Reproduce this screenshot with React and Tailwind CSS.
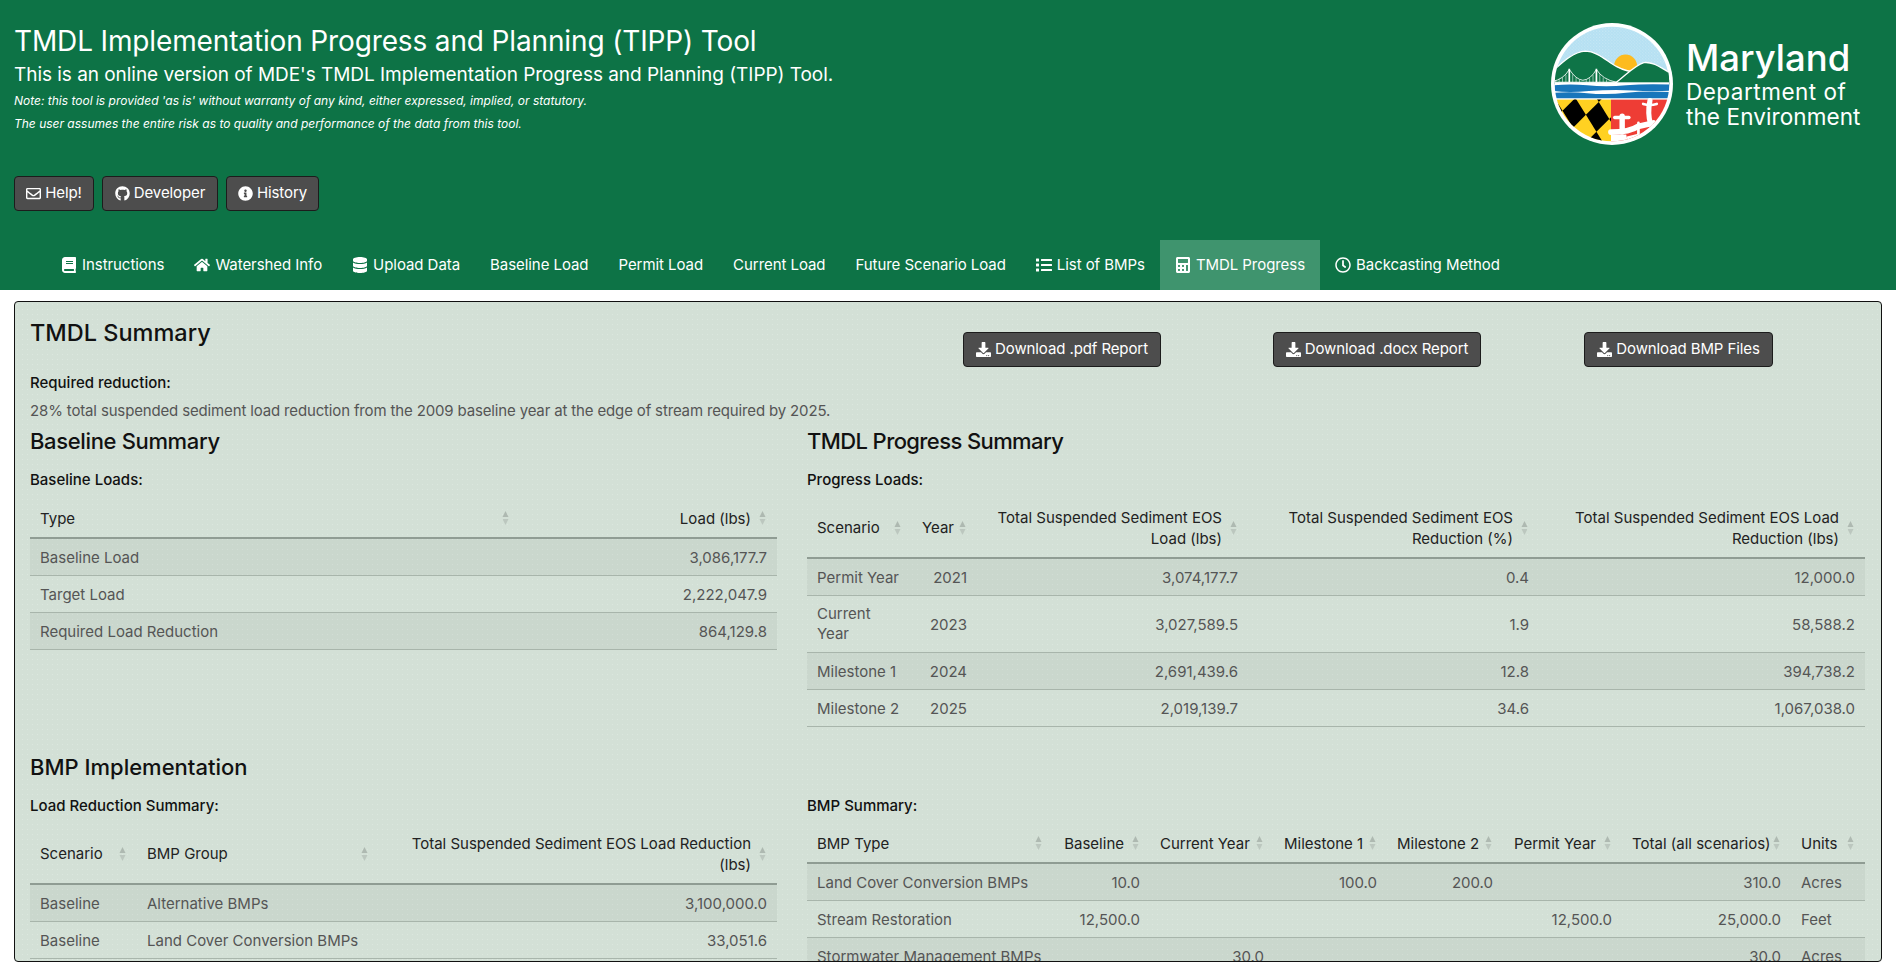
import React from "react";
import { FaRegEnvelope, FaGithub, FaInfoCircle, FaBook, FaHome, FaDatabase, FaList, FaCalculator, FaRegClock, FaDownload } from "react-icons/fa";

const cells = [];
for (let i = -4; i < 8; i++) {
  for (let j = -4; j < 8; j++) {
    if ((i + j + 40) % 2 === 0) {
      const p = (a, b) => `${72 + a * 31 + b * 38},${282 + a * 50 - b * 38}`;
      cells.push(`${p(i, j)} ${p(i + 1, j)} ${p(i + 1, j + 1)} ${p(i, j + 1)}`);
    }
  }
}

function Logo() {
  return (
    <svg width="122" height="122" viewBox="38 23 360 360" className="shrink-0">
      <defs>
        <clipPath id="c"><circle cx="218" cy="203" r="169" /></clipPath>
        <clipPath id="q"><rect x="38" y="249" width="177" height="140" /></clipPath>
        <pattern id="dots" width="9" height="9" patternUnits="userSpaceOnUse">
          <circle cx="2" cy="2" r="1.1" fill="#fff" />
          <circle cx="6.5" cy="6.5" r="0.9" fill="#fff" />
        </pattern>
      </defs>
      <circle cx="218" cy="203" r="180" fill="#fff" />
      <g clipPath="url(#c)">
        <rect x="38" y="23" width="360" height="180" fill="#b5e0f2" />
        <rect x="38" y="23" width="360" height="120" fill="url(#dots)" />
        <circle cx="258" cy="150" r="34" fill="#fdbb1e" />
        <path d="M40 168 C75 135 105 108 140 106 C175 106 205 138 232 152 C250 162 270 168 300 168 L400 168 L400 205 L40 205Z" fill="#0e7447" stroke="#fff" strokeWidth="4" />
        <path d="M228 200 C255 180 285 148 312 140 C340 136 365 158 400 176 L400 205 L228 205Z" fill="#0e7447" stroke="#fff" strokeWidth="4" />
        <g stroke="#fff" fill="none">
          <path d="M92 158 V198 M172 158 V198" strokeWidth="5" />
          <path d="M40 196 Q75 190 92 160 Q112 190 132 192 Q155 190 172 160 Q190 190 232 198" strokeWidth="2.5" />
          <path d="M52 192 V198 M62 188 V198 M72 184 V198 M82 176 V198 M102 174 V198 M112 184 V198 M122 190 V198 M142 190 V198 M152 186 V198 M162 176 V198 M182 174 V198 M192 184 V198 M202 190 V198" strokeWidth="1.6" />
          <path d="M40 198 H232" strokeWidth="3" />
        </g>
        <rect x="38" y="198" width="360" height="55" fill="#fff" />
        <path d="M38 208 Q90 201 145 207 T260 207 T400 205 V222 Q340 226 280 222 T150 224 T38 222Z" fill="#1876bb" />
        <path d="M38 230 Q90 224 145 230 T260 229 T400 227 V245 H38Z" fill="#1876bb" />
        <rect x="38" y="249" width="177" height="140" fill="#ffd122" />
        <g fill="#000" clipPath="url(#q)">
          {cells.map((c, i) => <polygon key={i} points={c} />)}
        </g>
        <rect x="215" y="249" width="183" height="140" fill="#ee3d35" />
        <g stroke="#fff" fill="none" strokeLinecap="round">
          <path d="M215 345 Q270 345 295 328 L340 318" strokeWidth="17" />
          <path d="M248 298 V345" strokeWidth="16" />
          <path d="M226 302 H268" strokeWidth="10" />
          <path d="M330 252 Q322 290 332 322" strokeWidth="15" />
          <path d="M310 262 Q330 268 350 262" strokeWidth="8" />
          <path d="M296 318 V350" strokeWidth="8" />
        </g>
        <path d="M215 352 H260 L268 392 H215Z" fill="#fff" />
        <path d="M262 358 L295 350 L305 368 L280 392 H266Z" fill="#fff" />
      </g>
    </svg>
  );
}

function Btn({ icon: I, children, className = "" }) {
  return (
    <button className={"inline-flex items-center justify-center h-[35px] bg-[#4d4d4d] border border-[#1c1c1c] rounded text-white text-[15px] tracking-[-0.1px] " + className}>
      <I className="text-[15px] mr-[4px]" />
      {children}
    </button>
  );
}

function Tab({ icon: I, children, active }) {
  return (
    <div className={"h-[50px] px-[15px] flex items-center text-[15px] tracking-[-0.06px] text-white " + (active ? "bg-[#3f946e]" : "")}>
      {I && <I className="text-[16px] mr-[5px]" />}
      {children}
    </div>
  );
}

function Sort() {
  return (
    <svg width="7" height="16" viewBox="0 0 7 16" className="absolute right-[11px] top-1/2 -translate-y-1/2">
      <path d="M3.5 1 L6.5 7 H0.5Z" fill="#aeb9b1" />
      <path d="M3.5 15 L6.5 9 H0.5Z" fill="#bcc7bf" />
    </svg>
  );
}

function DT({ columns, rows, widths, nowrapHead }) {
  return (
    <table className="w-full table-fixed border-collapse text-[15px] leading-[21px]">
      <colgroup>
        {widths.map((w, i) => <col key={i} style={{ width: w }} />)}
      </colgroup>
      <thead>
        <tr className="border-b-2 border-[#8f9c93] text-[#222]">
          {columns.map((c, i) => (
            <th key={i} className={"relative font-normal py-[8.5px] pl-[10px] pr-[26px] " + (c.r ? "text-right " : "text-left ") + (nowrapHead ? "whitespace-nowrap" : "")}>
              {c.t}
              <Sort />
            </th>
          ))}
        </tr>
      </thead>
      <tbody>
        {rows.map((r, j) => (
          <tr key={j} className={"border-b border-[#a8b5ab] text-[#555] " + (j % 2 === 0 ? "bg-[#0000000a]" : "")}>
            {r.map((v, i) => (
              <td key={i} className={"py-[7.5px] px-[10px] whitespace-nowrap " + (columns[i].r ? "text-right" : "text-left")}>{v}</td>
            ))}
          </tr>
        ))}
      </tbody>
    </table>
  );
}

const H = ({ children, className = "" }) => <h4 className={"text-[22px] leading-[26px] font-medium text-[#111] " + className}>{children}</h4>;
const L = ({ children, className = "" }) => <p className={"text-[15px] leading-[21px] font-medium text-[#111] " + className}>{children}</p>;

export default function App() {
  return (
    <div className="h-[964px] overflow-hidden bg-white flex flex-col font-['Inter','Liberation_Sans',sans-serif]">
      <header className="h-[290px] shrink-0 bg-[#0d7346] text-white relative">
        <div className="pl-[14px] pt-[23px]">
          <h1 className="text-[28px] leading-[36px] font-normal tracking-[-0.14px]">TMDL Implementation Progress and Planning (TIPP) Tool</h1>
          <p className="text-[19px] leading-[26px] mt-[3px] tracking-[-0.04px]">This is an online version of MDE's TMDL Implementation Progress and Planning (TIPP) Tool.</p>
          <p className="text-[12px] leading-[23px] italic mt-[1px]">Note: this tool is provided 'as is' without warranty of any kind, either expressed, implied, or statutory.</p>
          <p className="text-[12px] leading-[23px] italic">The user assumes the entire risk as to quality and performance of the data from this tool.</p>
          <div className="flex gap-[8px] mt-[41px]">
            <Btn icon={FaRegEnvelope} className="w-[80px]">Help!</Btn>
            <Btn icon={FaGithub} className="w-[116px]">Developer</Btn>
            <Btn icon={FaInfoCircle} className="w-[93px]">History</Btn>
          </div>
        </div>
        <div className="absolute left-[1551px] top-[23px] flex items-center">
          <Logo />
          <div className="ml-[13px]">
            <div className="text-[36.5px] leading-[41px] font-medium">Maryland</div>
            <div className="text-[22.5px] leading-[25px] tracking-[0.5px]">Department of</div>
            <div className="text-[22.5px] leading-[26px] tracking-[0.1px]">the Environment</div>
          </div>
        </div>
        <nav className="absolute left-[46px] bottom-0 flex">
          <Tab icon={FaBook}>Instructions</Tab>
          <Tab icon={FaHome}>Watershed Info</Tab>
          <Tab icon={FaDatabase}>Upload Data</Tab>
          <Tab>Baseline Load</Tab>
          <Tab>Permit Load</Tab>
          <Tab>Current Load</Tab>
          <Tab>Future Scenario Load</Tab>
          <Tab icon={FaList}>List of BMPs</Tab>
          <Tab icon={FaCalculator} active>TMDL Progress</Tab>
          <Tab icon={FaRegClock}>Backcasting Method</Tab>
        </nav>
      </header>
      <main className="mt-[11px] ml-[14px] w-[1868px] h-[661px] border border-[#111] rounded bg-[#d3e0d6] bg-[radial-gradient(#dce7df_0.7px,transparent_0.9px)] bg-[length:5px_5px] overflow-hidden px-[15px] pt-[18px]">
        <div className="flex">
          <H className="w-[917px] text-[23.5px]">TMDL Summary</H>
          <div className="relative h-[35px] mt-[12px] flex-1">
            <Btn icon={FaDownload} className="absolute left-[16px] top-0 w-[198px]">Download .pdf Report</Btn>
            <Btn icon={FaDownload} className="absolute left-[326px] top-0 w-[208px]">Download .docx Report</Btn>
            <Btn icon={FaDownload} className="absolute left-[637px] top-0 w-[189px]">Download BMP Files</Btn>
          </div>
        </div>
        <L className="mt-[5px]">Required reduction:</L>
        <p className="text-[15px] leading-[21px] text-[#555] mt-[7px] tracking-[-0.15px]">28% total suspended sediment load reduction from the 2009 baseline year at the edge of stream required by 2025.</p>
        <div className="grid grid-cols-[747px_1058px] gap-x-[30px] mt-[7px]">
          <div>
            <H className="tracking-[-0.35px]">Baseline Summary</H>
            <L className="mt-[15px] mb-[9px]">Baseline Loads:</L>
            <DT
              widths={["490px", "257px"]}
              columns={[{ t: "Type" }, { t: "Load (lbs)", r: 1 }]}
              rows={[
                ["Baseline Load", "3,086,177.7"],
                ["Target Load", "2,222,047.9"],
                ["Required Load Reduction", "864,129.8"],
              ]}
            />
          </div>
          <div>
            <H className="tracking-[-0.6px]">TMDL Progress Summary</H>
            <L className="mt-[15px] mb-[8px]">Progress Loads:</L>
            <DT
              widths={["105px", "65px", "271px", "291px", "326px"]}
              columns={[
                { t: "Scenario" },
                { t: "Year", r: 1 },
                { t: "Total Suspended Sediment EOS Load (lbs)", r: 1 },
                { t: "Total Suspended Sediment EOS Reduction (%)", r: 1 },
                { t: "Total Suspended Sediment EOS Load Reduction (lbs)", r: 1 },
              ]}
              rows={[
                ["Permit Year", "2021", "3,074,177.7", "0.4", "12,000.0"],
                [<span className="block leading-[20.5px]">Current<br />Year</span>, "2023", "3,027,589.5", "1.9", "58,588.2"],
                ["Milestone 1", "2024", "2,691,439.6", "12.8", "394,738.2"],
                ["Milestone 2", "2025", "2,019,139.7", "34.6", "1,067,038.0"],
              ]}
            />
          </div>
        </div>
        <H className="mt-[27px]">BMP Implementation</H>
        <div className="grid grid-cols-[747px_1058px] gap-x-[30px] mt-[15px]">
          <div>
            <L className="mb-[8px]">Load Reduction Summary:</L>
            <DT
              widths={["107px", "242px", "398px"]}
              columns={[
                { t: "Scenario" },
                { t: "BMP Group" },
                { t: "Total Suspended Sediment EOS Load Reduction (lbs)", r: 1 },
              ]}
              rows={[
                ["Baseline", "Alternative BMPs", "3,100,000.0"],
                ["Baseline", "Land Cover Conversion BMPs", "33,051.6"],
              ]}
            />
          </div>
          <div>
            <L className="mb-[8px]">BMP Summary:</L>
            <DT
              nowrapHead
              widths={["246px", "97px", "124px", "113px", "116px", "119px", "169px", "74px"]}
              columns={[
                { t: "BMP Type" },
                { t: "Baseline", r: 1 },
                { t: "Current Year", r: 1 },
                { t: "Milestone 1", r: 1 },
                { t: "Milestone 2", r: 1 },
                { t: "Permit Year", r: 1 },
                { t: "Total (all scenarios)", r: 1 },
                { t: "Units" },
              ]}
              rows={[
                ["Land Cover Conversion BMPs", "10.0", "", "100.0", "200.0", "", "310.0", "Acres"],
                ["Stream Restoration", "12,500.0", "", "", "", "12,500.0", "25,000.0", "Feet"],
                ["Stormwater Management BMPs", "", "30.0", "", "", "", "30.0", "Acres"],
              ]}
            />
          </div>
        </div>
      </main>
    </div>
  );
}
